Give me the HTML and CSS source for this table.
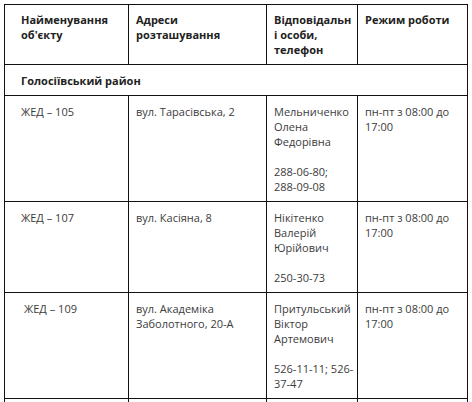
FILE: index.html
```html
<!DOCTYPE html>
<html lang="uk">
<head>
<meta charset="utf-8">
<link rel="stylesheet" href="styles.css">
</head>
<body>
<table class="tbl">
  <colgroup>
    <col class="c1"><col class="c2"><col class="c3"><col class="c4">
  </colgroup>
  <thead>
    <tr class="head">
      <th class="first">Найменування<br>об'єкту</th>
      <th>Адреси<br>розташування</th>
      <th>Відповідальн<br>і особи,<br>телефон</th>
      <th>Режим роботи</th>
    </tr>
  </thead>
  <tbody>
    <tr class="district">
      <td class="first" colspan="4">Голосіївський район</td>
    </tr>
    <tr>
      <td class="first">ЖЕД – 105</td>
      <td>вул. Тарасівська, 2</td>
      <td>Мельниченко<br>Олена<br>Федорівна<div class="phone">288-06-80;<br>288-09-08</div></td>
      <td>пн-пт з 08:00 до<br>17:00</td>
    </tr>
    <tr>
      <td class="first">ЖЕД – 107</td>
      <td>вул. Касіяна, 8</td>
      <td>Нікітенко<br>Валерій<br>Юрійович<div class="phone">250-30-73</div></td>
      <td>пн-пт з 08:00 до<br>17:00</td>
    </tr>
    <tr>
      <td class="first extra">ЖЕД – 109</td>
      <td>вул. Академіка<br>Заболотного, 20-А</td>
      <td>Притульський<br>Віктор<br>Артемович<div class="phone">526-11-11; 526-<br>37-47</div></td>
      <td>пн-пт з 08:00 до<br>17:00</td>
    </tr>
    <tr class="tail">
      <td class="first"></td>
      <td></td>
      <td></td>
      <td></td>
    </tr>
  </tbody>
</table>
</body>
</html>
```

FILE: styles.css
```css
html, body {
  margin: 0;
  padding: 0;
  background: #fff;
}
body {
  padding: 4px 0 0 4px;
  font-family: "Open Sans", "DejaVu Sans", sans-serif;
  font-size: 11px;
  line-height: 15px;
  color: #3c3c3c;
}
.tbl {
  border-collapse: collapse;
  table-layout: fixed;
  width: 463px;
}
.c1 { width: 124px; }
.c2 { width: 138px; }
.c3 { width: 91px; }
.c4 { width: 110px; }
.tbl th, .tbl td {
  border: 1px solid #111;
  padding: 7px 4px 7px 7px;
  text-align: left;
  vertical-align: top;
  white-space: nowrap;
  overflow: hidden;
}
.tbl tbody td {
  padding-top: 8px;
}
.tbl th {
  font-weight: 700;
  color: #222;
}
.tbl .first {
  padding-left: 16px;
}
.tbl .extra {
  padding-left: 19px;
}
.district td {
  font-weight: 700;
  color: #222;
}
.phone {
  margin-top: 15px;
}
.tail td {
  height: 40px;
}
```
